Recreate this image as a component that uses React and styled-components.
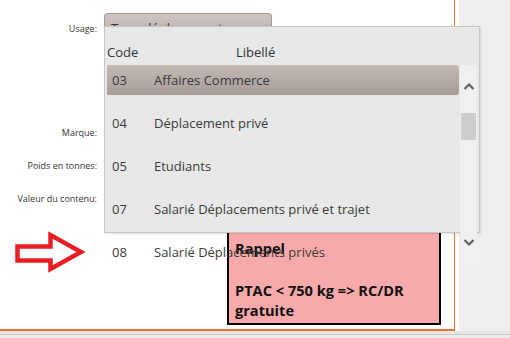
import React from "react";
import styled, { createGlobalStyle } from "styled-components";

const Global = createGlobalStyle`
  html, body {
    margin: 0;
    padding: 0;
    background: #efefef;
  }
  body {
    font-family: "Open Sans", "Noto Sans", sans-serif;
    color: #333;
  }
`;

const rows = [
  { code: "03", label: "Affaires Commerce", selected: true },
  { code: "04", label: "Déplacement privé" },
  { code: "05", label: "Etudiants" },
  { code: "07", label: "Salarié Déplacements privé et trajet" },
  { code: "08", label: "Salarié Déplacements privés" },
];

function App() {
  return (
    <>
      <Global />
      <Page>
        <Body>
          <Canvas>
            <Panel>
              <Form>
                <FieldRow height={30}>
                  <Label>Usage:</Label>
                  <Combo>Tous déplacements</Combo>
                </FieldRow>
                <FieldRow height={22} top={78}>
                  <Label>Marque:</Label>
                </FieldRow>
                <FieldRow height={22} top={11}>
                  <Label>Poids en tonnes:</Label>
                </FieldRow>
                <FieldRow height={22} top={11}>
                  <Label>Valeur du contenu:</Label>
                </FieldRow>
              </Form>

              <Reminder>
                <Line>Rappel</Line>
                <Line gap={22}>PTAC &lt; 750 kg =&gt; RC/DR</Line>
                <Line>gratuite</Line>
              </Reminder>

              <Arrow width="74" height="46" viewBox="0 0 74 46">
                <polygon
                  points="4.5,17.5 37.5,17.5 37.5,6 68,23 37.5,40 37.5,31.5 4.5,31.5"
                  fill="#fff"
                  stroke="#e81e24"
                  strokeWidth="4.5"
                  strokeLinejoin="miter"
                />
              </Arrow>

              <Dropdown>
                <Header>
                  <span>Code</span>
                  <span>Libellé</span>
                </Header>
                <List>
                  <Rows>
                    {rows.map((r) => (
                      <Row key={r.code} selected={r.selected}>
                        <Code>{r.code}</Code>
                        <span>{r.label}</span>
                      </Row>
                    ))}
                  </Rows>
                  <Scrollbar>
                    <Chevron viewBox="0 0 12 8" width="12" height="8">
                      <path d="M1.5 7 L6 2.5 L10.5 7" fill="none" stroke="#606060" strokeWidth="2.2" />
                    </Chevron>
                    <Track>
                      <Thumb />
                    </Track>
                    <Chevron viewBox="0 0 12 8" width="12" height="8">
                      <path d="M1.5 1 L6 5.5 L10.5 1" fill="none" stroke="#606060" strokeWidth="2.2" />
                    </Chevron>
                  </Scrollbar>
                </List>
              </Dropdown>
            </Panel>
          </Canvas>
          <Side />
        </Body>
        <Footer />
      </Page>
    </>
  );
}

const Page = styled.div`
  width: 510px;
  height: 338px;
  display: flex;
  flex-direction: column;
  overflow: hidden;
`;

const Body = styled.div`
  display: flex;
  height: 331px;
`;

const Canvas = styled.div`
  width: 459px;
  background: #fff;
  flex-shrink: 0;
`;

const Panel = styled.div`
  position: relative;
  width: 454px;
  height: 329px;
  border-right: 1px solid #f07032;
  border-bottom: 2px solid #f07032;
`;

const Side = styled.div`
  flex: 1;
  background: #efefef;
`;

const Footer = styled.div`
  height: 7px;
  background: #ececec;
  border-top: 3px solid #e6e6e6;
  box-shadow: inset 0 1px 0 #c8c8c8;
`;

const Form = styled.div`
  display: flex;
  flex-direction: column;
  padding-top: 12px;
`;

const FieldRow = styled.div`
  display: grid;
  grid-template-columns: 97px 168px;
  column-gap: 7px;
  align-items: center;
  height: ${(p) => p.height}px;
  margin-top: ${(p) => p.top || 0}px;
`;

const Label = styled.div`
  text-align: right;
  font-size: 9px;
  color: #333;
  padding-top: 2px;
`;

const Combo = styled.div`
  height: 28px;
  box-sizing: border-box;
  border: 1px solid #a39b97;
  border-radius: 3px;
  background: linear-gradient(#cdc6c2, #b2aaa6);
  font-size: 13px;
  line-height: 28px;
  padding-left: 6px;
  color: #333;
`;

const Reminder = styled.div`
  position: absolute;
  left: 227px;
  top: 212px;
  width: 214px;
  height: 113px;
  box-sizing: border-box;
  border: 2px solid #000;
  background: #f8aaab;
  padding: 24px 0 0 6px;
  font-weight: 700;
  font-size: 14.6px;
  line-height: 20px;
  color: #111;
`;

const Line = styled.div`
  margin-top: ${(p) => p.gap || 0}px;
  white-space: nowrap;
`;

const Arrow = styled.svg`
  position: absolute;
  left: 13px;
  top: 229px;
`;

const Dropdown = styled.div`
  position: absolute;
  left: 104px;
  top: 26px;
  width: 376px;
  height: 207px;
  box-sizing: border-box;
  background: #e8e8e8;
  border: 1px solid #c6c6c6;
  box-shadow: 1px 1px 2px rgba(0, 0, 0, 0.12);
  z-index: 2;
`;

const Header = styled.div`
  display: grid;
  grid-template-columns: 128px 1fr;
  height: 38px;
  box-sizing: border-box;
  padding: 12px 0 0 2px;
  align-items: center;
  font-size: 13px;
  color: #333;
  span:last-child {
    padding-left: 1px;
  }
`;

const List = styled.div`
  display: flex;
  padding-left: 2px;
`;

const Rows = styled.div`
  width: 352px;
  display: flex;
  flex-direction: column;
  gap: 13px;
`;

const Row = styled.div`
  height: 30px;
  display: flex;
  align-items: center;
  padding-left: 5px;
  font-size: 13px;
  color: #3a3a3a;
  border-radius: 0 3px 3px 0;
  background: ${(p) => (p.selected ? "linear-gradient(#c3bab6, #a69d98)" : "transparent")};
`;

const Code = styled.span`
  width: 42px;
`;

const Scrollbar = styled.div`
  width: 17px;
  height: 199px;
  margin-left: 1px;
  background: #f0f0f0;
  display: flex;
  flex-direction: column;
  align-items: center;
  padding-top: 17px;
  box-sizing: border-box;
`;

const Chevron = styled.svg`
  display: block;
`;

const Track = styled.div`
  height: 149px;
  width: 100%;
  padding-top: 23px;
  box-sizing: border-box;
`;

const Thumb = styled.div`
  width: 15px;
  height: 27px;
  margin-left: 1px;
  background: #cdcdcd;
`;

export default App;
